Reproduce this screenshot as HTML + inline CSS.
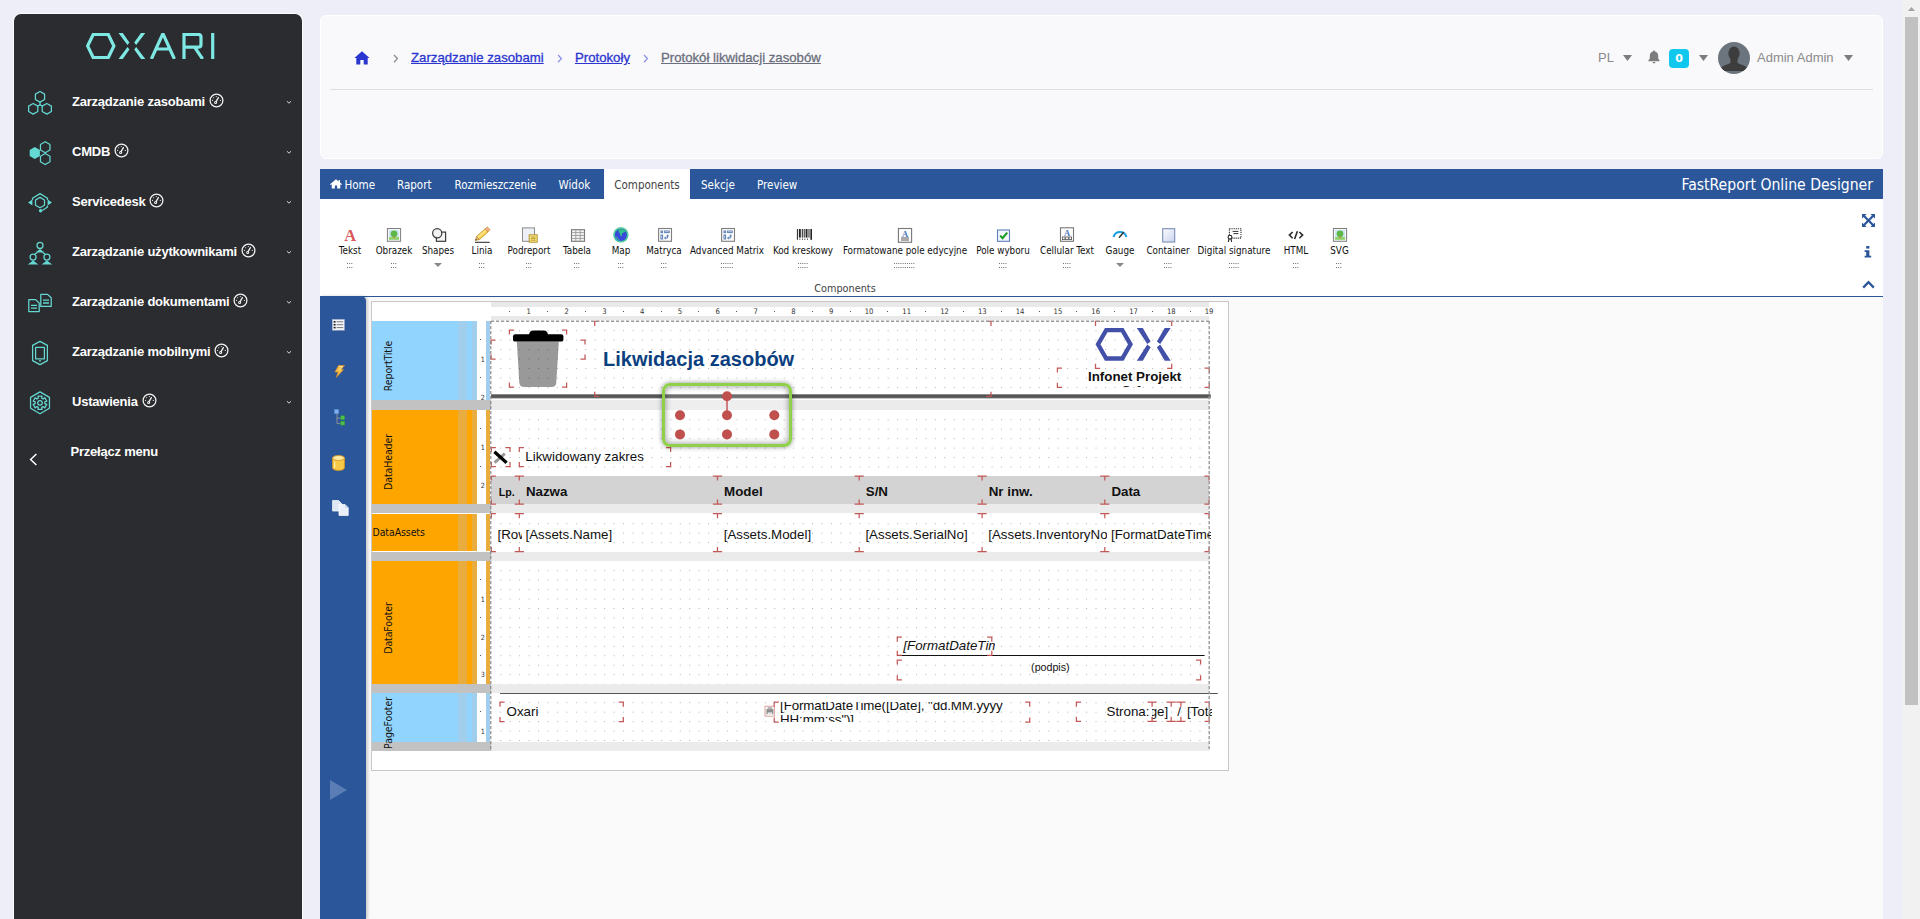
<!DOCTYPE html>
<html lang="pl">
<head>
<meta charset="utf-8">
<title>Protokół likwidacji zasobów</title>
<style>
*{box-sizing:border-box;margin:0;padding:0}
html,body{width:1920px;height:919px;overflow:hidden;background:#eeeef8;font-family:"Liberation Sans",sans-serif;}
.abs{position:absolute}
/* ---------- sidebar ---------- */
#sidebar{position:absolute;left:13px;top:13px;width:290px;height:906px;background:#2b2c2f;border:1px solid #fcfcfe;border-bottom:0;border-radius:8px 8px 0 0;}
#sidebar .logo{position:absolute;left:72px;top:19px}
.mi{position:absolute;left:0;width:288px;height:50px;color:#fff;font-weight:bold;font-size:13px;letter-spacing:-0.22px}
.mi .ic{position:absolute;left:12px;top:13px;width:28px;height:28px}
.mi .tx{position:absolute;left:58px;top:17px;white-space:nowrap;line-height:16px}
.mi .gg{display:inline-block;vertical-align:-1.6px;margin-left:4px}
.mi .ch{position:absolute;left:272px;top:24px}
/* ---------- header card ---------- */
#hdr{position:absolute;left:320px;top:14px;width:1563px;height:145px;}
#hdr .bg{position:absolute;left:0;top:1px;width:1563px;height:144px;background:#f9f9fb;border:1px solid #fff;border-radius:6px}
#hdr .hr{position:absolute;left:10px;top:75px;width:1543px;height:1px;background:#dcdde3}
.bc{position:absolute;top:36px;-webkit-text-stroke:.3px currentColor;font-size:13.2px;line-height:16px;white-space:nowrap;color:#2b35d0;text-decoration:underline;letter-spacing:0}
.bc.g{color:#6b6e7c}
/* ---------- scrollbar ---------- */
#sb{position:absolute;left:1903px;top:0;width:17px;height:919px;background:#f1f1f1}
#sb .th{position:absolute;left:2px;top:17px;width:13px;height:688px;background:#c1c1c1}
/* ---------- designer ---------- */
#tabs{position:absolute;left:320px;top:169px;width:1563px;height:30px;background:#2b579a;font-family:"DejaVu Sans Condensed","DejaVu Sans",sans-serif;font-size:11.5px;color:#fff}
#tabs span{position:absolute;top:0;padding-top:1px;line-height:30px;white-space:nowrap}
#tabs .act{background:#fff;color:#444;height:30px;text-align:center}
#ribbon{position:absolute;left:320px;top:199px;width:1563px;height:97px;background:#fff;font-family:"DejaVu Sans Condensed","DejaVu Sans",sans-serif;}
#ribbon .bl{position:absolute;left:0;top:97px;width:1563px;height:1px;background:#2b579a}
.rb{position:absolute;top:46.1px;font-size:9.8px;line-height:12px;color:#111;white-space:nowrap;transform:translateX(-50%)}
.rd{position:absolute;top:64px;transform:translateX(-50%);height:5px;background-image:radial-gradient(circle,#999 0.5px,transparent 0.6px);background-size:3px 3px;}
#lp{position:absolute;left:320px;top:296px;width:46px;height:623px;background:#2b579a;border-radius:0 5px 0 0;box-shadow:2px 0 3px rgba(0,0,0,.18)}
#ws{position:absolute;left:366px;top:297px;width:1517px;height:622px;background:#fafafa;}
#paper{position:absolute;left:371px;top:301px;width:858px;height:470px;background:#fff;border:1px solid #c8c8c8;overflow:hidden}

#paper .hr{font:7.6px/9.3px "DejaVu Sans Condensed",sans-serif;color:#333}
#paper .rn{position:absolute;top:0.4px;transform:translateX(-50%);}
#paper .rdot{position:absolute;top:4.2px;width:1px;height:1px;background:#555}
#paper .vn{position:absolute;left:1.4px;margin-top:.6px;width:9px;text-align:center;font:7.2px/11px "DejaVu Sans Condensed",sans-serif;color:#333}
#paper .vdot{position:absolute;left:3.6px;width:1px;height:1px;background:#555}
#paper .bl{overflow:visible}
#paper .bl span{position:absolute;left:16px;top:50%;transform:translate(-50%,-50%) rotate(-90deg);white-space:nowrap;font:10.5px/12px "DejaVu Sans Condensed",sans-serif;color:#111;letter-spacing:-.1px}
#paper .ob{overflow:hidden;white-space:nowrap;font-size:13.33px;color:#111;font-family:"Liberation Sans",sans-serif}
</style>
</head>
<body>
<div id="sidebar">
<svg class="logo" width="130" height="26" viewBox="0 0 130 26"><g fill="none" stroke="#7ee9e4" stroke-width="3.2" stroke-linejoin="miter">
<polygon points="1.6,13 7.2,1.45 22.3,1.45 27.9,13 22.3,24.55 7.2,24.55"/>

<path d="M65.4,26 L76.9,0.6 L88.4,26 M70.2,16 H83.8"/>
<path d="M98,26 V1.45 H112.2 Q115,1.45 115,4.2 V11.4 Q115,14.2 112.2,14.2 H98 M108.6,14.2 L116.6,26"/>
<path d="M126.7,0 V26"/></g><path fill="#7ee9e4" d="M32.5 0H36.8L43.4 9.5L41.5 12.1Z M32.5 26H36.8L43.4 16.5L41.5 13.9Z M59.3 0H55L48.2 9.5L50.2 12.1Z M59.3 26H55L48.2 16.5L50.2 13.9Z"/></svg>
<div class="mi" style="top:62px"><svg class="ic" viewBox="0 0 28 28"><g fill="none" stroke="#64d8d2" stroke-width="1.25" stroke-linejoin="round"><polygon points="14.00,2.50 18.59,5.15 18.59,10.45 14.00,13.10 9.41,10.45 9.41,5.15"/><polygon points="7.20,14.50 11.79,17.15 11.79,22.45 7.20,25.10 2.61,22.45 2.61,17.15"/><polygon points="20.80,14.50 25.39,17.15 25.39,22.45 20.80,25.10 16.21,22.45 16.21,17.15"/><path d="M14 13.1V15.6M14 15.6L11.8 17.2M14 15.6L16.2 17.2"/></g></svg><span class="tx">Zarządzanie zasobami<svg class="gg" width="15" height="15" viewBox="0 0 15 15"><circle cx="7.5" cy="7.5" r="6.4" fill="none" stroke="#f4f4f4" stroke-width="1.25"/><path d="M6.6 9.4 L9.4 4.6" stroke="#f4f4f4" stroke-width="1.3" stroke-linecap="round"/><circle cx="6.6" cy="9.4" r="1.5" fill="#f4f4f4"/><circle cx="6.6" cy="9.4" r="0.5" fill="#2b2c2f"/><g fill="#f4f4f4"><circle cx="3.6" cy="7.4" r=".55"/><circle cx="4.7" cy="4.7" r=".55"/><circle cx="7.3" cy="3.5" r=".55"/><circle cx="11.3" cy="7.4" r=".55"/></g></svg></span><svg class="ch" width="6" height="5" viewBox="0 0 6 5"><path d="M0.9 1.2 L3 3.2 L5.1 1.2" fill="none" stroke="#d8d8d8" stroke-width="1"/></svg></div>
<div class="mi" style="top:112px"><svg class="ic" viewBox="0 0 28 28"><polygon points="8.80,8.10 13.91,11.05 13.91,16.95 8.80,19.90 3.69,16.95 3.69,11.05" fill="#64d8d2"/><g fill="none" stroke="#64d8d2" stroke-width="1.25" stroke-linejoin="round"><polygon points="19.20,2.70 23.96,5.45 23.96,10.95 19.20,13.70 14.44,10.95 14.44,5.45"/><polygon points="19.20,14.50 23.96,17.25 23.96,22.75 19.20,25.50 14.44,22.75 14.44,17.25"/></g></svg><span class="tx">CMDB<svg class="gg" width="15" height="15" viewBox="0 0 15 15"><circle cx="7.5" cy="7.5" r="6.4" fill="none" stroke="#f4f4f4" stroke-width="1.25"/><path d="M6.6 9.4 L9.4 4.6" stroke="#f4f4f4" stroke-width="1.3" stroke-linecap="round"/><circle cx="6.6" cy="9.4" r="1.5" fill="#f4f4f4"/><circle cx="6.6" cy="9.4" r="0.5" fill="#2b2c2f"/><g fill="#f4f4f4"><circle cx="3.6" cy="7.4" r=".55"/><circle cx="4.7" cy="4.7" r=".55"/><circle cx="7.3" cy="3.5" r=".55"/><circle cx="11.3" cy="7.4" r=".55"/></g></svg></span><svg class="ch" width="6" height="5" viewBox="0 0 6 5"><path d="M0.9 1.2 L3 3.2 L5.1 1.2" fill="none" stroke="#d8d8d8" stroke-width="1"/></svg></div>
<div class="mi" style="top:162px"><svg class="ic" viewBox="0 0 28 28"><g fill="none" stroke="#64d8d2" stroke-width="1.25" stroke-linejoin="round"><path d="M6.5 11 L6.5 9.2 L14 4.6 L21.5 9.2 L21.5 11"/><polygon points="14.00,8.40 18.50,11.00 18.50,16.20 14.00,18.80 9.50,16.20 9.50,11.00"/><path d="M21.5 16.5 L21.5 18 L16.2 21.6"/></g><path d="M2 13.6 L6.4 10.6 L6.4 16.6Z M26 13.6 L21.6 10.6 L21.6 16.6Z" fill="#64d8d2"/><circle cx="14.6" cy="21.8" r="1.7" fill="#64d8d2"/></svg><span class="tx">Servicedesk<svg class="gg" width="15" height="15" viewBox="0 0 15 15"><circle cx="7.5" cy="7.5" r="6.4" fill="none" stroke="#f4f4f4" stroke-width="1.25"/><path d="M6.6 9.4 L9.4 4.6" stroke="#f4f4f4" stroke-width="1.3" stroke-linecap="round"/><circle cx="6.6" cy="9.4" r="1.5" fill="#f4f4f4"/><circle cx="6.6" cy="9.4" r="0.5" fill="#2b2c2f"/><g fill="#f4f4f4"><circle cx="3.6" cy="7.4" r=".55"/><circle cx="4.7" cy="4.7" r=".55"/><circle cx="7.3" cy="3.5" r=".55"/><circle cx="11.3" cy="7.4" r=".55"/></g></svg></span><svg class="ch" width="6" height="5" viewBox="0 0 6 5"><path d="M0.9 1.2 L3 3.2 L5.1 1.2" fill="none" stroke="#d8d8d8" stroke-width="1"/></svg></div>
<div class="mi" style="top:212px"><svg class="ic" viewBox="0 0 28 28"><g fill="none" stroke="#64d8d2" stroke-width="1.25"><circle cx="14" cy="6.4" r="3"/><circle cx="7.1" cy="18" r="3"/><circle cx="20.9" cy="18" r="3"/><path d="M11.5 13.5 L8.6 15.2 M16.5 13.5 L19.4 15.2"/></g><path d="M14 10 L18.6 13.6 H9.4Z M7.1 21.6 L12.4 25.6 H1.8Z M20.9 21.6 L26.2 25.6 H15.6Z" fill="#64d8d2"/></svg><span class="tx">Zarządzanie użytkownikami<svg class="gg" width="15" height="15" viewBox="0 0 15 15"><circle cx="7.5" cy="7.5" r="6.4" fill="none" stroke="#f4f4f4" stroke-width="1.25"/><path d="M6.6 9.4 L9.4 4.6" stroke="#f4f4f4" stroke-width="1.3" stroke-linecap="round"/><circle cx="6.6" cy="9.4" r="1.5" fill="#f4f4f4"/><circle cx="6.6" cy="9.4" r="0.5" fill="#2b2c2f"/><g fill="#f4f4f4"><circle cx="3.6" cy="7.4" r=".55"/><circle cx="4.7" cy="4.7" r=".55"/><circle cx="7.3" cy="3.5" r=".55"/><circle cx="11.3" cy="7.4" r=".55"/></g></svg></span><svg class="ch" width="6" height="5" viewBox="0 0 6 5"><path d="M0.9 1.2 L3 3.2 L5.1 1.2" fill="none" stroke="#d8d8d8" stroke-width="1"/></svg></div>
<div class="mi" style="top:262px"><svg class="ic" viewBox="0 0 28 28"><g fill="none" stroke="#64d8d2" stroke-width="1.25" stroke-linejoin="round"><path d="M2.8 10.6 H9.6 L13.2 14 V22.6 H2.8Z"/><path d="M14.8 5.4 H21.6 L25.2 8.8 V17.4 H14.8Z"/><path d="M5 16.4H11M5 19.2H11M17 11.2H23M17 14H23" stroke-width="1.3"/></g></svg><span class="tx">Zarządzanie dokumentami<svg class="gg" width="15" height="15" viewBox="0 0 15 15"><circle cx="7.5" cy="7.5" r="6.4" fill="none" stroke="#f4f4f4" stroke-width="1.25"/><path d="M6.6 9.4 L9.4 4.6" stroke="#f4f4f4" stroke-width="1.3" stroke-linecap="round"/><circle cx="6.6" cy="9.4" r="1.5" fill="#f4f4f4"/><circle cx="6.6" cy="9.4" r="0.5" fill="#2b2c2f"/><g fill="#f4f4f4"><circle cx="3.6" cy="7.4" r=".55"/><circle cx="4.7" cy="4.7" r=".55"/><circle cx="7.3" cy="3.5" r=".55"/><circle cx="11.3" cy="7.4" r=".55"/></g></svg></span><svg class="ch" width="6" height="5" viewBox="0 0 6 5"><path d="M0.9 1.2 L3 3.2 L5.1 1.2" fill="none" stroke="#d8d8d8" stroke-width="1"/></svg></div>
<div class="mi" style="top:312px"><svg class="ic" viewBox="0 0 28 28"><g fill="none" stroke="#64d8d2" stroke-width="1.25" stroke-linejoin="round"><path d="M14 2.4 L21.4 6.4 V21.6 L14 25.6 L6.6 21.6 V6.4Z"/><rect x="9.6" y="8.4" width="8.8" height="11.4"/></g><rect x="13" y="21.2" width="2" height="1.3" fill="#64d8d2"/></svg><span class="tx">Zarządzanie mobilnymi<svg class="gg" width="15" height="15" viewBox="0 0 15 15"><circle cx="7.5" cy="7.5" r="6.4" fill="none" stroke="#f4f4f4" stroke-width="1.25"/><path d="M6.6 9.4 L9.4 4.6" stroke="#f4f4f4" stroke-width="1.3" stroke-linecap="round"/><circle cx="6.6" cy="9.4" r="1.5" fill="#f4f4f4"/><circle cx="6.6" cy="9.4" r="0.5" fill="#2b2c2f"/><g fill="#f4f4f4"><circle cx="3.6" cy="7.4" r=".55"/><circle cx="4.7" cy="4.7" r=".55"/><circle cx="7.3" cy="3.5" r=".55"/><circle cx="11.3" cy="7.4" r=".55"/></g></svg></span><svg class="ch" width="6" height="5" viewBox="0 0 6 5"><path d="M0.9 1.2 L3 3.2 L5.1 1.2" fill="none" stroke="#d8d8d8" stroke-width="1"/></svg></div>
<div class="mi" style="top:362px"><svg class="ic" viewBox="0 0 28 28"><g fill="none" stroke="#64d8d2" stroke-width="1.25" stroke-linejoin="round"><polygon points="14.00,2.90 23.44,8.35 23.44,19.25 14.00,24.70 4.56,19.25 4.56,8.35"/><polygon points="11.95,7.11 16.05,7.11 15.68,9.20 17.15,10.05 18.77,8.68 20.82,12.23 18.83,12.95 18.83,14.65 20.82,15.37 18.77,18.92 17.15,17.55 15.68,18.40 16.05,20.49 11.95,20.49 12.32,18.40 10.85,17.55 9.23,18.92 7.18,15.37 9.17,14.65 9.17,12.95 7.18,12.23 9.23,8.68 10.85,10.05 12.32,9.20"/><circle cx="14" cy="13.8" r="2.3"/></g></svg><span class="tx">Ustawienia<svg class="gg" width="15" height="15" viewBox="0 0 15 15"><circle cx="7.5" cy="7.5" r="6.4" fill="none" stroke="#f4f4f4" stroke-width="1.25"/><path d="M6.6 9.4 L9.4 4.6" stroke="#f4f4f4" stroke-width="1.3" stroke-linecap="round"/><circle cx="6.6" cy="9.4" r="1.5" fill="#f4f4f4"/><circle cx="6.6" cy="9.4" r="0.5" fill="#2b2c2f"/><g fill="#f4f4f4"><circle cx="3.6" cy="7.4" r=".55"/><circle cx="4.7" cy="4.7" r=".55"/><circle cx="7.3" cy="3.5" r=".55"/><circle cx="11.3" cy="7.4" r=".55"/></g></svg></span><svg class="ch" width="6" height="5" viewBox="0 0 6 5"><path d="M0.9 1.2 L3 3.2 L5.1 1.2" fill="none" stroke="#d8d8d8" stroke-width="1"/></svg></div>
<div class="mi" style="top:412px"><svg class="abs" style="left:15px;top:27px" width="9" height="13" viewBox="0 0 9 13"><path d="M7.4 1 L1.6 6.5 L7.4 12" fill="none" stroke="#fff" stroke-width="1.5"/></svg><span class="tx" style="left:56.5px;top:18px">Przełącz menu</span></div>
</div>
<div id="hdr"><div class="bg"></div><div class="hr"></div>
<svg class="abs" style="left:34px;top:36.5px" width="16" height="14" viewBox="0 0 16 14"><path d="M8 0.3 L0.4 6.9 H2.3 V13.4 H6.3 V9 H9.7 V13.4 H13.7 V6.9 H15.6 Z" fill="#2b35d0"/></svg><svg class="abs" style="left:72.5px;top:39.5px" width="6" height="10" viewBox="0 0 6 10"><path d="M1 1 L4.4 4.6 L1 8.2" fill="none" stroke="#8a8a8a" stroke-width="1.3"/></svg><span class="bc" style="left:91px">Zarządzanie zasobami</span><svg class="abs" style="left:236.5px;top:39.5px" width="6" height="10" viewBox="0 0 6 10"><path d="M1 1 L4.4 4.6 L1 8.2" fill="none" stroke="#8b90e6" stroke-width="1.3"/></svg><span class="bc" style="left:255px">Protokoły</span><svg class="abs" style="left:322.5px;top:39.5px" width="6" height="10" viewBox="0 0 6 10"><path d="M1 1 L4.4 4.6 L1 8.2" fill="none" stroke="#8b90e6" stroke-width="1.3"/></svg><span class="bc g" style="left:341px">Protokół likwidacji zasobów</span><span class="abs" style="left:1278px;top:36px;font-size:13px;line-height:16px;color:#8a8a8a">PL</span><svg class="abs" style="left:1302.5px;top:40.5px" width="9" height="6" viewBox="0 0 9 6"><path d="M0 0 H9 L4.5 6Z" fill="#7d7d7d"/></svg><svg class="abs" style="left:1328px;top:36px" width="12" height="14" viewBox="0 0 12 14"><path d="M6 0.5 C6.6 0.5 7 0.9 7 1.5 C9 2 10.2 3.6 10.2 5.8 V8.6 L11.6 10.6 V11.2 H0.4 V10.6 L1.8 8.6 V5.8 C1.8 3.6 3 2 5 1.5 C5 0.9 5.4 0.5 6 0.5Z M4.6 12 H7.4 C7.4 12.8 6.8 13.4 6 13.4 C5.2 13.4 4.6 12.8 4.6 12Z" fill="#7d7d7d"/></svg><span class="abs" style="left:1349px;top:35px;width:20px;height:19px;border-radius:4px;background:#10c8ee;color:#fff;font:bold 11px/19px 'DejaVu Sans',sans-serif;text-align:center">0</span><svg class="abs" style="left:1379px;top:40.5px" width="9" height="6" viewBox="0 0 9 6"><path d="M0 0 H9 L4.5 6Z" fill="#7d7d7d"/></svg><svg class="abs" style="left:1398px;top:28px" width="32" height="32" viewBox="0 0 32 32"><defs><clipPath id="av"><circle cx="16" cy="16" r="16"/></clipPath></defs><circle cx="16" cy="16" r="16" fill="#6c757d"/><g clip-path="url(#av)" fill="#3d3d3d"><ellipse cx="16" cy="11.5" rx="5.6" ry="7"/><path d="M12.5 16 H19.5 V21 C22 22.5 27 23.5 29 25.5 V29 H3 V25.5 C5 23.5 10 22.5 12.5 21Z"/></g></svg><span class="abs" style="left:1437px;top:36px;font-size:13px;line-height:16px;color:#8a8a8a;white-space:nowrap">Admin Admin</span><svg class="abs" style="left:1524px;top:40.5px" width="9" height="6" viewBox="0 0 9 6"><path d="M0 0 H9 L4.5 6Z" fill="#7d7d7d"/></svg>
</div>
<div id="sb"><div class="th"></div><svg class="abs" style="left:5px;top:6.5px" width="7" height="4" viewBox="0 0 7 4"><path d="M0 4 L3.5 0 L7 4Z" fill="#a3a3a3"/></svg></div>
<div id="tabs">
<svg class="abs" style="left:10px;top:9.5px" width="12" height="10" viewBox="0 0 12 10"><path d="M6 0.2 L0 5.2 L0.7 6 L1.7 5.2 V9.6 H4.9 V6.6 H7.1 V9.6 H10.3 V5.2 L11.3 6 L12 5.2 L10 3.5 V1 H8.6 V2.4Z" fill="#fff"/></svg><span style="left:24.5px">Home</span><span style="left:77px">Raport</span><span style="left:134.5px">Rozmieszczenie</span><span style="left:238.5px">Widok</span><span class="act" style="left:284px;width:86px">Components</span><span style="left:381px">Sekcje</span><span style="left:437px">Preview</span><span style="right:10px;font-size:15.6px">FastReport Online Designer</span>
</div>
<div id="ribbon"><div class="bl"></div>
<svg class="abs" style="left:21px;top:27px" width="18" height="18" viewBox="-1 -1 18 18"><text x="8.3" y="14" font-family="Liberation Serif,serif" font-weight="bold" font-size="16.5" fill="#d9575a" text-anchor="middle">A</text></svg><span class="rb" style="left:30px">Tekst</span><svg class="abs" style="left:26.8px;top:64px" width="7" height="6" viewBox="0 0 7 6" fill="#707070"><rect x="0.00" y="0" width="1" height="1"/><rect x="0.00" y="4" width="1" height="1"/><rect x="2.15" y="0" width="1" height="1"/><rect x="2.15" y="4" width="1" height="1"/><rect x="4.30" y="0" width="1" height="1"/><rect x="4.30" y="4" width="1" height="1"/></svg><svg class="abs" style="left:65px;top:27px" width="18" height="18" viewBox="-1 -1 18 18"><rect x="1.4" y="1.5" width="13.2" height="12.8" fill="#f6f6f6" stroke="#7f7f7f"/><rect x="3" y="3" width="10" height="9.8" fill="#cfe6fa"/><rect x="3" y="10" width="10" height="2.8" fill="#92d36e"/><circle cx="8" cy="6.8" r="3.4" fill="#5db947"/><rect x="7.3" y="9.4" width="1.4" height="2" fill="#d08a45"/></svg><span class="rb" style="left:74px">Obrazek</span><svg class="abs" style="left:70.8px;top:64px" width="7" height="6" viewBox="0 0 7 6" fill="#707070"><rect x="0.00" y="0" width="1" height="1"/><rect x="0.00" y="4" width="1" height="1"/><rect x="2.15" y="0" width="1" height="1"/><rect x="2.15" y="4" width="1" height="1"/><rect x="4.30" y="0" width="1" height="1"/><rect x="4.30" y="4" width="1" height="1"/></svg><svg class="abs" style="left:109px;top:27px" width="18" height="18" viewBox="-1 -1 18 18"><rect x="6.4" y="5.1" width="9.2" height="9.2" fill="#f4f4f4" stroke="#3c3c3c" stroke-width="1.2"/><circle cx="7.2" cy="6.2" r="4.6" fill="#f1f1f1" stroke="#3c3c3c" stroke-width="1.2"/></svg><span class="rb" style="left:118px">Shapes</span><svg class="abs" style="left:114px;top:64px" width="8" height="4" viewBox="0 0 8 4"><path d="M0 0H8L4 4Z" fill="#8a8a8a"/></svg><svg class="abs" style="left:153px;top:27px" width="18" height="18" viewBox="-1 -1 18 18"><path d="M1 15.3 H15.7" stroke="#222" stroke-width="1"/><g transform="translate(1.4,13.4) rotate(-42)"><path d="M3.4 -2.1 H15 V2.1 H3.4Z" fill="#f8d65c" stroke="#c98f1f" stroke-width=".8"/><path d="M3.4 -0.6 H15" stroke="#fbeaa0" stroke-width="1"/><path d="M0 0 L3.4 -2.1 V2.1Z" fill="#e8c08a" stroke="#b47a2a" stroke-width=".6"/><path d="M0 0 L1.4 -.85 V.85Z" fill="#4a2a10"/><rect x="15" y="-2.1" width="3" height="4.2" rx="1" fill="#f4b0a0" stroke="#c98f1f" stroke-width=".8"/></g></svg><span class="rb" style="left:162px">Linia</span><svg class="abs" style="left:158.8px;top:64px" width="7" height="6" viewBox="0 0 7 6" fill="#707070"><rect x="0.00" y="0" width="1" height="1"/><rect x="0.00" y="4" width="1" height="1"/><rect x="2.15" y="0" width="1" height="1"/><rect x="2.15" y="4" width="1" height="1"/><rect x="4.30" y="0" width="1" height="1"/><rect x="4.30" y="4" width="1" height="1"/></svg><svg class="abs" style="left:200px;top:27px" width="18" height="18" viewBox="-1 -1 18 18"><rect x="1.5" y="0.9" width="12" height="13.4" fill="#eef0f8" stroke="#8a8a8a"/><rect x="8.2" y="7.8" width="8" height="7.4" fill="#fbe88c" stroke="#b3952c"/><path d="M9.8 10H14.6M9.8 11.6H14.6M9.8 13.2H14.6" stroke="#a88a1a" stroke-width=".8"/></svg><span class="rb" style="left:209px">Podreport</span><svg class="abs" style="left:205.8px;top:64px" width="7" height="6" viewBox="0 0 7 6" fill="#707070"><rect x="0.00" y="0" width="1" height="1"/><rect x="0.00" y="4" width="1" height="1"/><rect x="2.15" y="0" width="1" height="1"/><rect x="2.15" y="4" width="1" height="1"/><rect x="4.30" y="0" width="1" height="1"/><rect x="4.30" y="4" width="1" height="1"/></svg><svg class="abs" style="left:248px;top:27px" width="18" height="18" viewBox="-1 -1 18 18"><rect x="2.5" y="2.7" width="13" height="11.6" fill="#f4f4f4" stroke="#777" stroke-width="1.1"/><path d="M2.5 5.6H15.5M2.5 8.5H15.5M2.5 11.4H15.5M6.8 2.7V14.3M11.2 2.7V14.3" stroke="#9a9a9a" stroke-width=".9"/></svg><span class="rb" style="left:257px">Tabela</span><svg class="abs" style="left:253.8px;top:64px" width="7" height="6" viewBox="0 0 7 6" fill="#707070"><rect x="0.00" y="0" width="1" height="1"/><rect x="0.00" y="4" width="1" height="1"/><rect x="2.15" y="0" width="1" height="1"/><rect x="2.15" y="4" width="1" height="1"/><rect x="4.30" y="0" width="1" height="1"/><rect x="4.30" y="4" width="1" height="1"/></svg><svg class="abs" style="left:292px;top:27px" width="18" height="18" viewBox="-1 -1 18 18"><circle cx="7.9" cy="7.9" r="7.6" fill="#2fb58c"/><circle cx="7.9" cy="7.9" r="6" fill="#3a48dc"/><path d="M6 2.6 C8 1.6 11.4 2.4 12.6 4.6 C11.4 5 10.6 6.2 9.4 6 C8.4 7.4 9.6 8.4 8.4 9.4 C7 9 7.4 7 6.6 6 C5.4 5.6 5 3.6 6 2.6Z" fill="#33c08a"/><path d="M3 9 C4 10.4 5.4 11.6 7 13.4 C5 13.4 3 11.4 3 9Z" fill="#33c08a"/><circle cx="7.9" cy="7.9" r="6.8" fill="none" stroke="#7fe0c0" stroke-width=".7" opacity=".8"/></svg><span class="rb" style="left:301px">Map</span><svg class="abs" style="left:297.8px;top:64px" width="7" height="6" viewBox="0 0 7 6" fill="#707070"><rect x="0.00" y="0" width="1" height="1"/><rect x="0.00" y="4" width="1" height="1"/><rect x="2.15" y="0" width="1" height="1"/><rect x="2.15" y="4" width="1" height="1"/><rect x="4.30" y="0" width="1" height="1"/><rect x="4.30" y="4" width="1" height="1"/></svg><svg class="abs" style="left:335px;top:27px" width="18" height="18" viewBox="-1 -1 18 18"><rect x="2.6" y="1.5" width="12.9" height="12.8" fill="#fbfbfb" stroke="#7f7f7f" stroke-width="1.1"/><g fill="none" stroke="#5b7fb5" stroke-width="1"><rect x="5" y="4" width="1.6" height="1.6"/><rect x="8.6" y="4" width="4.6" height="1.6"/><rect x="5" y="8" width="1.6" height="4"/><path d="M8.6 11 H11.6 V8 M8.6 11 L10 9.8 M8.6 11 L10 12.2 M11.6 8 L10.4 9.2 M11.6 8 L12.8 9.2"/></g></svg><span class="rb" style="left:344px">Matryca</span><svg class="abs" style="left:340.8px;top:64px" width="7" height="6" viewBox="0 0 7 6" fill="#707070"><rect x="0.00" y="0" width="1" height="1"/><rect x="0.00" y="4" width="1" height="1"/><rect x="2.15" y="0" width="1" height="1"/><rect x="2.15" y="4" width="1" height="1"/><rect x="4.30" y="0" width="1" height="1"/><rect x="4.30" y="4" width="1" height="1"/></svg><svg class="abs" style="left:398px;top:27px" width="18" height="18" viewBox="-1 -1 18 18"><rect x="2.6" y="1.5" width="12.9" height="12.8" fill="#fbfbfb" stroke="#7f7f7f" stroke-width="1.1"/><g fill="none" stroke="#5b7fb5" stroke-width="1"><rect x="5" y="4" width="1.6" height="1.6"/><rect x="8.6" y="4" width="4.6" height="1.6"/><rect x="5" y="8" width="1.6" height="4"/><path d="M8.6 11 H11.6 V8 M8.6 11 L10 9.8 M8.6 11 L10 12.2 M11.6 8 L10.4 9.2 M11.6 8 L12.8 9.2"/></g></svg><span class="rb" style="left:407px">Advanced Matrix</span><svg class="abs" style="left:400.6px;top:64px" width="14" height="6" viewBox="0 0 14 6" fill="#707070"><rect x="0.00" y="0" width="1" height="1"/><rect x="0.00" y="4" width="1" height="1"/><rect x="2.15" y="0" width="1" height="1"/><rect x="2.15" y="4" width="1" height="1"/><rect x="4.30" y="0" width="1" height="1"/><rect x="4.30" y="4" width="1" height="1"/><rect x="6.45" y="0" width="1" height="1"/><rect x="6.45" y="4" width="1" height="1"/><rect x="8.60" y="0" width="1" height="1"/><rect x="8.60" y="4" width="1" height="1"/><rect x="10.75" y="0" width="1" height="1"/><rect x="10.75" y="4" width="1" height="1"/></svg><svg class="abs" style="left:474px;top:27px" width="18" height="18" viewBox="-1 -1 18 18"><g fill="#222"><rect x="1.9" y="2" width="1" height="10.8"/><rect x="3.9" y="2" width="1.9" height="8.6"/><rect x="6.8" y="2" width="1" height="8.6"/><rect x="8.7" y="2" width="1" height="8.6"/><rect x="10.6" y="2" width="1.9" height="8.6"/><rect x="13.5" y="2" width="1" height="8.6"/><rect x="15.4" y="2" width="1.9" height="10.8"/><rect x="4.4" y="11.6" width=".9" height="1.2"/><rect x="7" y="11.6" width=".9" height="1.2"/><rect x="9.4" y="11.6" width=".9" height="1.2"/><rect x="12" y="11.6" width=".9" height="1.2"/></g></svg><span class="rb" style="left:483px">Kod kreskowy</span><svg class="abs" style="left:477.6px;top:64px" width="12" height="6" viewBox="0 0 12 6" fill="#707070"><rect x="0.00" y="0" width="1" height="1"/><rect x="0.00" y="4" width="1" height="1"/><rect x="2.15" y="0" width="1" height="1"/><rect x="2.15" y="4" width="1" height="1"/><rect x="4.30" y="0" width="1" height="1"/><rect x="4.30" y="4" width="1" height="1"/><rect x="6.45" y="0" width="1" height="1"/><rect x="6.45" y="4" width="1" height="1"/><rect x="8.60" y="0" width="1" height="1"/><rect x="8.60" y="4" width="1" height="1"/></svg><svg class="abs" style="left:576px;top:27px" width="18" height="18" viewBox="-1 -1 18 18"><rect x="1.4" y="1.5" width="13.2" height="13.8" fill="#fdfdfd" stroke="#777" stroke-width="1.1"/><text x="8" y="9.6" font-family="Liberation Serif,serif" font-weight="bold" font-size="8.5" fill="#4a78c0" text-anchor="middle">A</text><path d="M4 11H12M4 13H12" stroke="#444" stroke-width=".9"/></svg><span class="rb" style="left:585px">Formatowane pole edycyjne</span><svg class="abs" style="left:574.2px;top:64px" width="22" height="6" viewBox="0 0 22 6" fill="#707070"><rect x="0.00" y="0" width="1" height="1"/><rect x="0.00" y="4" width="1" height="1"/><rect x="2.15" y="0" width="1" height="1"/><rect x="2.15" y="4" width="1" height="1"/><rect x="4.30" y="0" width="1" height="1"/><rect x="4.30" y="4" width="1" height="1"/><rect x="6.45" y="0" width="1" height="1"/><rect x="6.45" y="4" width="1" height="1"/><rect x="8.60" y="0" width="1" height="1"/><rect x="8.60" y="4" width="1" height="1"/><rect x="10.75" y="0" width="1" height="1"/><rect x="10.75" y="4" width="1" height="1"/><rect x="12.90" y="0" width="1" height="1"/><rect x="12.90" y="4" width="1" height="1"/><rect x="15.05" y="0" width="1" height="1"/><rect x="15.05" y="4" width="1" height="1"/><rect x="17.20" y="0" width="1" height="1"/><rect x="17.20" y="4" width="1" height="1"/><rect x="19.35" y="0" width="1" height="1"/><rect x="19.35" y="4" width="1" height="1"/></svg><svg class="abs" style="left:674px;top:27px" width="18" height="18" viewBox="-1 -1 18 18"><rect x="2.5" y="3" width="12" height="11.3" fill="#f2f6fc" stroke="#5f7fbf" stroke-width="1.1"/><path d="M5.2 8.6 L7.6 11.2 L12.2 5.6" fill="none" stroke="#17991a" stroke-width="2"/></svg><span class="rb" style="left:683px">Pole wyboru</span><svg class="abs" style="left:678.7px;top:64px" width="10" height="6" viewBox="0 0 10 6" fill="#707070"><rect x="0.00" y="0" width="1" height="1"/><rect x="0.00" y="4" width="1" height="1"/><rect x="2.15" y="0" width="1" height="1"/><rect x="2.15" y="4" width="1" height="1"/><rect x="4.30" y="0" width="1" height="1"/><rect x="4.30" y="4" width="1" height="1"/><rect x="6.45" y="0" width="1" height="1"/><rect x="6.45" y="4" width="1" height="1"/></svg><svg class="abs" style="left:738px;top:27px" width="18" height="18" viewBox="-1 -1 18 18"><rect x="1.5" y="0.8" width="13" height="13.5" fill="#fdfdfd" stroke="#777" stroke-width="1.1"/><text x="8" y="8.6" font-family="Liberation Serif,serif" font-weight="bold" font-size="8.5" fill="#4a78c0" text-anchor="middle">A</text><g fill="#fff" stroke="#555" stroke-width=".8"><rect x="3.4" y="10" width="2.6" height="2.6"/><rect x="6.7" y="10" width="2.6" height="2.6"/><rect x="10" y="10" width="2.6" height="2.6"/></g></svg><span class="rb" style="left:747px">Cellular Text</span><svg class="abs" style="left:742.7px;top:64px" width="10" height="6" viewBox="0 0 10 6" fill="#707070"><rect x="0.00" y="0" width="1" height="1"/><rect x="0.00" y="4" width="1" height="1"/><rect x="2.15" y="0" width="1" height="1"/><rect x="2.15" y="4" width="1" height="1"/><rect x="4.30" y="0" width="1" height="1"/><rect x="4.30" y="4" width="1" height="1"/><rect x="6.45" y="0" width="1" height="1"/><rect x="6.45" y="4" width="1" height="1"/></svg><svg class="abs" style="left:791px;top:27px" width="18" height="18" viewBox="-1 -1 18 18"><path d="M1.6 10 A6.6 6.6 0 0 1 14.4 10" fill="none" stroke="#1b9fe4" stroke-width="2.1"/><path d="M7.4 10.2 L11.4 5.6" stroke="#333" stroke-width="1.5" stroke-linecap="round"/></svg><span class="rb" style="left:800px">Gauge</span><svg class="abs" style="left:796px;top:64px" width="8" height="4" viewBox="0 0 8 4"><path d="M0 0H8L4 4Z" fill="#8a8a8a"/></svg><svg class="abs" style="left:839px;top:27px" width="18" height="18" viewBox="-1 -1 18 18"><defs><linearGradient id="cg" x1="0" y1="0" x2="1" y2="1"><stop offset="0" stop-color="#fdfdff"/><stop offset="1" stop-color="#c9d3ec"/></linearGradient></defs><rect x="2.7" y="1.7" width="12" height="13.3" fill="url(#cg)" stroke="#7a8db8" stroke-width="1.1"/></svg><span class="rb" style="left:848px">Container</span><svg class="abs" style="left:843.7px;top:64px" width="10" height="6" viewBox="0 0 10 6" fill="#707070"><rect x="0.00" y="0" width="1" height="1"/><rect x="0.00" y="4" width="1" height="1"/><rect x="2.15" y="0" width="1" height="1"/><rect x="2.15" y="4" width="1" height="1"/><rect x="4.30" y="0" width="1" height="1"/><rect x="4.30" y="4" width="1" height="1"/><rect x="6.45" y="0" width="1" height="1"/><rect x="6.45" y="4" width="1" height="1"/></svg><svg class="abs" style="left:905px;top:27px" width="18" height="18" viewBox="-1 -1 18 18"><rect x="3.4" y="1.7" width="11.6" height="9.4" fill="#fff" stroke="#333" stroke-width="1.1" stroke-dasharray="1.2 .9"/><path d="M6.6 4.4H12.4M7.6 6.6H12.4" stroke="#333" stroke-width="1"/><circle cx="4" cy="10.2" r="1.9" fill="#fff" stroke="#222" stroke-width="1.1"/><path d="M3 12 L2.3 15 M5 12 L5.7 15" stroke="#222" stroke-width="1.1"/></svg><span class="rb" style="left:914px">Digital signature</span><svg class="abs" style="left:908.6px;top:64px" width="12" height="6" viewBox="0 0 12 6" fill="#707070"><rect x="0.00" y="0" width="1" height="1"/><rect x="0.00" y="4" width="1" height="1"/><rect x="2.15" y="0" width="1" height="1"/><rect x="2.15" y="4" width="1" height="1"/><rect x="4.30" y="0" width="1" height="1"/><rect x="4.30" y="4" width="1" height="1"/><rect x="6.45" y="0" width="1" height="1"/><rect x="6.45" y="4" width="1" height="1"/><rect x="8.60" y="0" width="1" height="1"/><rect x="8.60" y="4" width="1" height="1"/></svg><svg class="abs" style="left:967px;top:27px" width="18" height="18" viewBox="-1 -1 18 18"><path d="M4.6 5 L1.4 8.1 L4.6 11.2 M11.4 5 L14.6 8.1 L11.4 11.2 M9.4 4.2 L6.6 12" fill="none" stroke="#2c2c2c" stroke-width="1.6"/></svg><span class="rb" style="left:976px">HTML</span><svg class="abs" style="left:972.8px;top:64px" width="7" height="6" viewBox="0 0 7 6" fill="#707070"><rect x="0.00" y="0" width="1" height="1"/><rect x="0.00" y="4" width="1" height="1"/><rect x="2.15" y="0" width="1" height="1"/><rect x="2.15" y="4" width="1" height="1"/><rect x="4.30" y="0" width="1" height="1"/><rect x="4.30" y="4" width="1" height="1"/></svg><svg class="abs" style="left:1010.5px;top:27px" width="18" height="18" viewBox="-1 -1 18 18"><rect x="1.4" y="1.5" width="13.2" height="12.8" fill="#f6f6f6" stroke="#7f7f7f"/><rect x="3" y="3" width="10" height="9.8" fill="#cfe6fa"/><rect x="3" y="10" width="10" height="2.8" fill="#92d36e"/><circle cx="8" cy="6.8" r="3.4" fill="#5db947"/><rect x="7.3" y="9.4" width="1.4" height="2" fill="#d08a45"/></svg><span class="rb" style="left:1019.5px">SVG</span><svg class="abs" style="left:1016.3px;top:64px" width="7" height="6" viewBox="0 0 7 6" fill="#707070"><rect x="0.00" y="0" width="1" height="1"/><rect x="0.00" y="4" width="1" height="1"/><rect x="2.15" y="0" width="1" height="1"/><rect x="2.15" y="4" width="1" height="1"/><rect x="4.30" y="0" width="1" height="1"/><rect x="4.30" y="4" width="1" height="1"/></svg><span class="rb" style="left:525px;top:84.2px;font-size:10.8px;color:#444">Components</span><svg class="abs" style="left:1541.5px;top:14.5px" width="13" height="13" viewBox="0 0 13 13" fill="#2b579a"><path d="M0 0H4.6L3.1 1.5L6.5 4.9L9.9 1.5L8.4 0H13V4.6L11.5 3.1L8.1 6.5L11.5 9.9L13 8.4V13H8.4L9.9 11.5L6.5 8.1L3.1 11.5L4.6 13H0V8.4L1.5 9.9L4.9 6.5L1.5 3.1L0 4.6Z"/></svg><svg class="abs" style="left:1544px;top:46.5px" width="8" height="12" viewBox="0 0 8 12" fill="#2b579a"><rect x="2.2" y="0" width="3.2" height="2.6"/><path d="M0.6 4.2H5.4V9.8H7.2V11.6H0.6V9.8H2.2V6H0.6Z"/></svg><svg class="abs" style="left:1541.5px;top:81px" width="13" height="9" viewBox="0 0 13 9"><path d="M1.2 7.6 L6.5 2.2 L11.8 7.6" fill="none" stroke="#2b579a" stroke-width="2.3"/></svg>
</div>
<div id="ws"></div>
<div id="lp"><svg class="abs" style="left:12px;top:22.5px" width="13" height="12" viewBox="0 0 13 12"><rect x=".3" y=".4" width="12" height="10.8" fill="#f4f6fb" stroke="#aab4d0" stroke-width=".6"/><g fill="#222"><rect x="1.6" y="2" width="2" height="1.6"/><rect x="1.6" y="4.9" width="2" height="1.6"/><rect x="1.6" y="7.8" width="2" height="1.6"/></g><g fill="#777"><rect x="4.6" y="2.3" width="6.6" height="1"/><rect x="4.6" y="5.2" width="6.6" height="1"/><rect x="4.6" y="8.1" width="6.6" height="1"/></g></svg><svg class="abs" style="left:13.5px;top:68.5px" width="11" height="13" viewBox="0 0 11 13"><path d="M4.6 0.4 L10.6 0.4 L7 4.6 L9.6 4.6 L2.2 12.4 L4.2 7 L1 7Z" fill="#f7c24a" stroke="#d98a2a" stroke-width=".7" stroke-linejoin="round"/><path d="M5.2 1.4 L8.4 1.4 L5.6 5.2" stroke="#fde9a8" stroke-width=".9" fill="none"/></svg><svg class="abs" style="left:13.5px;top:112.5px" width="12" height="17" viewBox="0 0 12 17"><path d="M3 4.6 V14.6 H6.6 M3 9.2 H6.6" fill="none" stroke="#8a8f98" stroke-width="1"/><rect x=".5" y=".5" width="4.2" height="4.2" fill="#7fb2ee" stroke="#5a8fd0" stroke-width=".5"/><rect x="6.8" y="6.8" width="3.9" height="3.9" fill="#4fc04a" stroke="#2f9a2f" stroke-width=".5"/><rect x="6.8" y="12.2" width="3.9" height="3.9" fill="#4fc04a" stroke="#2f9a2f" stroke-width=".5"/></svg><svg class="abs" style="left:11.5px;top:159px" width="13" height="16" viewBox="0 0 13 16"><path d="M.6 3 V12.8 C.6 14.4 3.2 15.4 6.5 15.4 C9.8 15.4 12.4 14.4 12.4 12.8 V3Z" fill="#f7c948" stroke="#d9961e" stroke-width=".9"/><ellipse cx="6.5" cy="3" rx="5.9" ry="2.5" fill="#fdeaa0" stroke="#d9961e" stroke-width=".9"/><path d="M2.6 6.4 V13" stroke="#fde9a0" stroke-width="1.4"/></svg><svg class="abs" style="left:12px;top:204px" width="18" height="16" viewBox="0 0 18 16"><path d="M.6 .6 H6.6 L9.6 3.6 V11 H.6Z" fill="#dfe6f3" stroke="#f8fafd" stroke-width=".8"/><path d="M7 4.6 H13 L16.2 7.8 V15.4 H7Z" fill="#e9eef8" stroke="#fbfcfe" stroke-width=".8"/><path d="M13 4.6 V7.8 H16.2" fill="#c9d3e6"/></svg><svg class="abs" style="left:10px;top:484px" width="17" height="20" viewBox="0 0 17 20"><path d="M0 0 L17 10 L0 20Z" fill="#5b7db5"/></svg></div>
<div id="paper"><!--P0-->
<svg width="0" height="0" style="position:absolute"><defs><pattern id="grid" x="-6" y="-6" width="9.449" height="9.449" patternUnits="userSpaceOnUse"><rect x="3.8" y="3.8" width="1" height="1" fill="#b0b0b0"/></pattern></defs></svg>
<div class="abs " style="left:119px;top:0px;width:718.1px;height:18.3px;background:#e9e9e9"></div>
<div class="abs " style="left:119px;top:4.8px;width:738.1px;height:9.3px;background:#fff"></div>
<div class="abs hr" style="left:119px;top:4.8px;width:738.1px;height:9.3px;"><span class="rn" style="left:37.8px">1</span><span class="rn" style="left:75.6px">2</span><span class="rn" style="left:113.4px">3</span><span class="rn" style="left:151.2px">4</span><span class="rn" style="left:189.0px">5</span><span class="rn" style="left:226.8px">6</span><span class="rn" style="left:264.6px">7</span><span class="rn" style="left:302.4px">8</span><span class="rn" style="left:340.2px">9</span><span class="rn" style="left:378.0px">10</span><span class="rn" style="left:415.7px">11</span><span class="rn" style="left:453.5px">12</span><span class="rn" style="left:491.3px">13</span><span class="rn" style="left:529.1px">14</span><span class="rn" style="left:566.9px">15</span><span class="rn" style="left:604.7px">16</span><span class="rn" style="left:642.5px">17</span><span class="rn" style="left:680.3px">18</span><span class="rn" style="left:718.1px">19</span><i class="rdot" style="left:18.4px"></i><i class="rdot" style="left:56.2px"></i><i class="rdot" style="left:94.0px"></i><i class="rdot" style="left:131.8px"></i><i class="rdot" style="left:169.6px"></i><i class="rdot" style="left:207.4px"></i><i class="rdot" style="left:245.2px"></i><i class="rdot" style="left:283.0px"></i><i class="rdot" style="left:320.8px"></i><i class="rdot" style="left:358.6px"></i><i class="rdot" style="left:396.3px"></i><i class="rdot" style="left:434.1px"></i><i class="rdot" style="left:471.9px"></i><i class="rdot" style="left:509.7px"></i><i class="rdot" style="left:547.5px"></i><i class="rdot" style="left:585.3px"></i><i class="rdot" style="left:623.1px"></i><i class="rdot" style="left:660.9px"></i><i class="rdot" style="left:698.7px"></i></div>
<div class="abs " style="left:0px;top:19px;width:86px;height:79.3px;background:#91d5ff"></div>
<div class="abs " style="left:86px;top:19px;width:9.1px;height:79.3px;background:#a0ceec"></div>
<div class="abs " style="left:95.1px;top:19px;width:5.1px;height:79.3px;background:#91d5ff"></div>
<div class="abs " style="left:100.2px;top:19px;width:4.7px;height:79.3px;background:#a0ceec"></div>
<div class="abs " style="left:114px;top:19px;width:4.3px;height:79.3px;background:#a0ceec"></div>
<div class="abs " style="left:104.9px;top:19px;width:9.1px;height:79.3px;background:#fff;overflow:hidden"><span class="vn" style="top:32.3px">1</span><span class="vn" style="top:70.1px">2</span><i class="vdot" style="top:18.4px"></i><i class="vdot" style="top:56.2px"></i></div>
<div class="abs bc" style="left:119px;top:19px;width:718.1px;height:79.3px;"><svg style="position:absolute;left:2px;top:2px" width="716" height="77.3"><rect width="100%" height="100%" fill="url(#grid)"/></svg></div>
<div class="abs " style="left:0px;top:98.3px;width:119px;height:9.3px;background:#c2c2c2"></div>
<div class="abs " style="left:119px;top:98.3px;width:718.1px;height:9.3px;background:#ebebeb"></div>
<div class="abs " style="left:0px;top:107.6px;width:86px;height:94.6px;background:#ffa500"></div>
<div class="abs " style="left:86px;top:107.6px;width:9.1px;height:94.6px;background:#e9ac3e"></div>
<div class="abs " style="left:95.1px;top:107.6px;width:5.1px;height:94.6px;background:#ffa500"></div>
<div class="abs " style="left:100.2px;top:107.6px;width:4.7px;height:94.6px;background:#e9ac3e"></div>
<div class="abs " style="left:114px;top:107.6px;width:4.3px;height:94.6px;background:#e9ac3e"></div>
<div class="abs " style="left:104.9px;top:107.6px;width:9.1px;height:94.6px;background:#fff;overflow:hidden"><span class="vn" style="top:32.3px">1</span><span class="vn" style="top:70.1px">2</span><i class="vdot" style="top:18.4px"></i><i class="vdot" style="top:56.2px"></i><i class="vdot" style="top:94.0px"></i></div>
<div class="abs bc" style="left:119px;top:107.6px;width:718.1px;height:94.6px;"><svg style="position:absolute;left:2px;top:2px" width="716" height="92.6"><rect width="100%" height="100%" fill="url(#grid)"/></svg></div>
<div class="abs " style="left:0px;top:202.2px;width:119px;height:9.3px;background:#c2c2c2"></div>
<div class="abs " style="left:119px;top:202.2px;width:718.1px;height:9.3px;background:#ebebeb"></div>
<div class="abs " style="left:0px;top:211.6px;width:86px;height:37.9px;background:#ffa500"></div>
<div class="abs " style="left:86px;top:211.6px;width:9.1px;height:37.9px;background:#e9ac3e"></div>
<div class="abs " style="left:95.1px;top:211.6px;width:5.1px;height:37.9px;background:#ffa500"></div>
<div class="abs " style="left:100.2px;top:211.6px;width:4.7px;height:37.9px;background:#e9ac3e"></div>
<div class="abs " style="left:114px;top:211.6px;width:4.3px;height:37.9px;background:#e9ac3e"></div>
<div class="abs " style="left:104.9px;top:211.6px;width:9.1px;height:37.9px;background:#fff;overflow:hidden"></div>
<div class="abs" style="left:0.5px;top:211.6px;height:37.9px;line-height:37.9px;font:10.5px/37.9px 'DejaVu Sans Condensed',sans-serif;color:#111;letter-spacing:-.1px">DataAssets</div>
<div class="abs bc" style="left:119px;top:211.6px;width:718.1px;height:37.9px;"><svg style="position:absolute;left:2px;top:2px" width="716" height="35.9"><rect width="100%" height="100%" fill="url(#grid)"/></svg></div>
<div class="abs " style="left:0px;top:249.5px;width:119px;height:9.3px;background:#c2c2c2"></div>
<div class="abs " style="left:119px;top:249.5px;width:718.1px;height:9.3px;background:#ebebeb"></div>
<div class="abs " style="left:0px;top:258.9px;width:86px;height:122.7px;background:#ffa500"></div>
<div class="abs " style="left:86px;top:258.9px;width:9.1px;height:122.7px;background:#e9ac3e"></div>
<div class="abs " style="left:95.1px;top:258.9px;width:5.1px;height:122.7px;background:#ffa500"></div>
<div class="abs " style="left:100.2px;top:258.9px;width:4.7px;height:122.7px;background:#e9ac3e"></div>
<div class="abs " style="left:114px;top:258.9px;width:4.3px;height:122.7px;background:#e9ac3e"></div>
<div class="abs " style="left:104.9px;top:258.9px;width:9.1px;height:122.7px;background:#fff;overflow:hidden"><span class="vn" style="top:32.3px">1</span><span class="vn" style="top:70.1px">2</span><span class="vn" style="top:107.9px">3</span><i class="vdot" style="top:18.4px"></i><i class="vdot" style="top:56.2px"></i><i class="vdot" style="top:94.0px"></i></div>
<div class="abs bc" style="left:119px;top:258.9px;width:718.1px;height:122.7px;"><svg style="position:absolute;left:2px;top:2px" width="716" height="120.7"><rect width="100%" height="100%" fill="url(#grid)"/></svg></div>
<div class="abs " style="left:0px;top:381.6px;width:119px;height:9.3px;background:#c2c2c2"></div>
<div class="abs " style="left:119px;top:381.6px;width:718.1px;height:9.3px;background:#ebebeb"></div>
<div class="abs " style="left:0px;top:391px;width:86px;height:48.7px;background:#91d5ff"></div>
<div class="abs " style="left:86px;top:391px;width:9.1px;height:48.7px;background:#a0ceec"></div>
<div class="abs " style="left:95.1px;top:391px;width:5.1px;height:48.7px;background:#91d5ff"></div>
<div class="abs " style="left:100.2px;top:391px;width:4.7px;height:48.7px;background:#a0ceec"></div>
<div class="abs " style="left:114px;top:391px;width:4.3px;height:48.7px;background:#a0ceec"></div>
<div class="abs " style="left:104.9px;top:391px;width:9.1px;height:48.7px;background:#fff;overflow:hidden"><span class="vn" style="top:32.3px">1</span><i class="vdot" style="top:18.4px"></i></div>
<div class="abs bc" style="left:119px;top:391px;width:718.1px;height:48.7px;"><svg style="position:absolute;left:2px;top:2px" width="716" height="46.7"><rect width="100%" height="100%" fill="url(#grid)"/></svg></div>
<div class="abs " style="left:0px;top:439.7px;width:119px;height:9.3px;background:#c2c2c2"></div>
<div class="abs " style="left:119px;top:439.7px;width:718.1px;height:9.3px;background:#ebebeb"></div>
<div class="abs bl" style="left:0px;top:24.5px;width:36px;height:79.3px"><span>ReportTitle</span></div>
<div class="abs bl" style="left:0px;top:113.1px;width:36px;height:94.6px"><span>DataHeader</span></div>
<div class="abs bl" style="left:0px;top:264.4px;width:36px;height:122.7px"><span>DataFooter</span></div>
<div class="abs bl" style="left:0px;top:396.5px;width:36px;height:48.7px"><span>PageFooter</span></div>
<svg class="abs" style="left:0;top:0" width="856" height="468" viewBox="372 302 856 468"><path d="M529 335.6 Q529 330.4 533.4 330.4 H543.6 Q548 330.4 548 335.6Z" fill="#000"/><rect x="513" y="334.2" width="50.4" height="7.4" rx="2.2" fill="#000"/><path d="M516.8 341.6 H558.8 L556.3 382.5 Q556 387 551.5 387 H524.1 Q519.6 387 519.3 382.5Z" fill="#000" fill-opacity=".4"/><g fill="none" stroke="#4350a8" stroke-width="4.3" stroke-linejoin="miter"><polygon points="1098,344.3 1106.2,330.2 1122.3,330.2 1130.5,344.3 1122.3,358.5 1106.2,358.5"/></g><path d="M1136.8 328H1142.8L1150.6 341.4L1147.3 344.1Z M1136.8 360.7H1142.8L1150.6 347.3L1147.3 344.6Z M1170.7 328H1164.7L1156.9 341.4L1160.2 344.1Z M1170.7 360.7H1164.7L1156.9 347.3L1160.2 344.6Z" fill="#4350a8"/><path d="M494.6 462.6 L504.8 453.6" stroke="#9a9a9a" stroke-width="3"/><path d="M494.4 451.8 L506.6 462.8" stroke="#000" stroke-width="3.2"/><path d="M897.3 655.5 H1204.6" stroke="#111" stroke-width="1.1"/><path d="M500 693.5 H1217.8" stroke="#555" stroke-width="1.2"/><g><rect x="765" y="706.2" width="9.4" height="10" fill="#fff" fill-opacity=".6" stroke="#d9a3a0" stroke-width="1"/><rect x="766.4" y="709" width="7" height="5.4" fill="#8c8c8c"/><rect x="767.6" y="707" width="4.6" height="2.4" fill="#b5b5b5"/><rect x="767.6" y="712.4" width="4.6" height="2.6" fill="#e8e8e8"/></g><path d="M491 396.3 H1210.6" stroke="#8a8a8a" stroke-width="4.4"/><path d="M491 396.3 H1210.6" stroke="#555" stroke-width="2.8"/></svg>
<div class="abs" style="left:231px;top:44.5px;font:bold 20px/24px 'Liberation Sans',sans-serif;color:#0b3f7f;white-space:nowrap">Likwidacja zasobów</div>
<div class="abs ob" style="left:685.4px;top:66px;width:151.8px;height:19.4px;text-align:center;font-weight:bold;line-height:13.7px"><div style="margin-top:1.9px;padding-left:2.7px">Infonet Projekt<br>S.A.</div></div>
<div class="abs ob" style="left:147.3px;top:144.8px;width:151.7px;height:19.1px;line-height:19.1px;padding-left:6px;">Likwidowany zakres</div>
<div class="abs ob" style="left:119.3px;top:174px;width:28.4px;height:28.2px;line-height:28.2px;padding-left:2.5px;background:#d3d3d3;font-weight:bold;padding-top:1.7px;font-size:10.67px;text-align:center;padding-left:2.5px;">Lp.</div>
<div class="abs ob" style="left:147.3px;top:174px;width:198.6px;height:28.2px;line-height:28.2px;padding-left:6.6px;background:#d3d3d3;font-weight:bold;padding-top:1.7px;">Nazwa</div>
<div class="abs ob" style="left:345.5px;top:174px;width:142.1px;height:28.2px;line-height:28.2px;padding-left:6.6px;background:#d3d3d3;font-weight:bold;padding-top:1.7px;">Model</div>
<div class="abs ob" style="left:487.2px;top:174px;width:123.3px;height:28.2px;line-height:28.2px;padding-left:6.6px;background:#d3d3d3;font-weight:bold;padding-top:1.7px;">S/N</div>
<div class="abs ob" style="left:610.1px;top:174px;width:123.1px;height:28.2px;line-height:28.2px;padding-left:6.6px;background:#d3d3d3;font-weight:bold;padding-top:1.7px;">Nr inw.</div>
<div class="abs ob" style="left:732.8px;top:174px;width:104.6px;height:28.2px;line-height:28.2px;padding-left:6.6px;background:#d3d3d3;font-weight:bold;padding-top:1.7px;">Data</div>
<div class="abs ob" style="left:119.3px;top:211.6px;width:30.4px;height:37.9px;line-height:37.9px;padding-left:6.2px;padding-top:2.2px">[Row#]</div>
<div class="abs ob" style="left:147.3px;top:211.6px;width:200.6px;height:37.9px;line-height:37.9px;padding-left:6.2px;padding-top:2.2px">[Assets.Name]</div>
<div class="abs ob" style="left:345.5px;top:211.6px;width:144.1px;height:37.9px;line-height:37.9px;padding-left:6.2px;padding-top:2.2px">[Assets.Model]</div>
<div class="abs ob" style="left:487.2px;top:211.6px;width:125.3px;height:37.9px;line-height:37.9px;padding-left:6.2px;padding-top:2.2px">[Assets.SerialNo]</div>
<div class="abs ob" style="left:610.1px;top:211.6px;width:125.1px;height:37.9px;line-height:37.9px;padding-left:6.2px;padding-top:2.2px">[Assets.InventoryNo]</div>
<div class="abs ob" style="left:732.8px;top:211.6px;width:106.6px;height:37.9px;line-height:37.9px;padding-left:6.2px;padding-top:2.2px">[FormatDateTime([Assets.Date],"dd.MM.yyyy")]</div>
<div class="abs ob" style="left:525.3px;top:334.6px;width:97.4px;height:18.2px;line-height:18.2px;padding-left:6px;font-style:italic;">[FormatDateTime([Date],"dd.MM.yyyy")]</div>
<div class="abs ob" style="left:525.3px;top:355.8px;width:303.7px;height:19.8px;line-height:19.8px;padding-left:2.4px;font-size:10.67px;text-align:center;">(podpis)</div>
<div class="abs ob" style="left:128px;top:400.2px;width:123.7px;height:19.4px;line-height:19.4px;padding-left:6.6px;padding-top:0.2px">Oxari</div>
<div class="abs ob" style="left:402.2px;top:400.2px;width:255.5px;height:19.8px;"><div style="margin-top:-3.1px;padding-left:5.9px;line-height:14.3px;white-space:normal;width:240px;letter-spacing:-.11px">[FormatDateTime([Date], "dd.MM.yyyy HH:mm:ss")]</div></div>
<div class="abs ob" style="left:704.4px;top:399.5px;width:76.1px;height:19.2px;line-height:19.2px;padding-left:0px;text-align:right;padding-right:3px;">Strona:</div>
<div class="abs ob" style="left:780.1px;top:399.5px;width:19.5px;height:19.2px;line-height:19.2px;padding-left:0px;"><span style="position:absolute;right:3.4px;top:0">[Page]</span></div>
<div class="abs ob" style="left:799.2px;top:399.5px;width:10.1px;height:19.2px;line-height:19.2px;padding-left:6px;">/</div>
<div class="abs ob" style="left:808.9px;top:399.5px;width:30.7px;height:19.2px;line-height:19.2px;padding-left:6px;">[TotalPages]</div>
<svg class="abs" style="left:0;top:0" width="856" height="468" viewBox="372 302 856 468"><path d="M491 344.6V340H495.6M580.4 340H585V344.6M491 354.4V359H495.6M580.4 359H585V354.4M509.4 334.6V330H514.0M562.0 330H566.6V334.6M509.4 382.5V387.1H514.0M562.0 387.1H566.6V382.5M594.7 325.90000000000003V321.3H599.3000000000001M986.4 321.3H991V325.90000000000003M594.7 391.79999999999995V396.4H599.3000000000001M986.4 396.4H991V391.79999999999995M1095.5 325.90000000000003V321.3H1100.1M1167.1000000000001 321.3H1171.7V325.90000000000003M1095.5 363.7V368.3H1100.1M1167.1000000000001 368.3H1171.7V363.7M1057.4 372.6V368H1062.0M1204.6000000000001 368H1209.2V372.6M1057.4 382.79999999999995V387.4H1062.0M1204.6000000000001 387.4H1209.2V382.79999999999995M491.3 452.1V447.5H495.90000000000003M505.4 447.5H510V452.1M491.3 462.0V466.6H495.90000000000003M505.4 466.6H510V462.0M519.3 452.1V447.5H523.9M666.0 447.5H670.6V452.1M519.3 462.0V466.6H523.9M666.0 466.6H670.6V462.0M491.3 480.6V476H495.90000000000003M514.6999999999999 476H519.3V480.6M491.3 499.59999999999997V504.2H495.90000000000003M514.6999999999999 504.2H519.3V499.59999999999997M519.3 480.6V476H523.9M712.9 476H717.5V480.6M519.3 499.59999999999997V504.2H523.9M712.9 504.2H717.5V499.59999999999997M717.5 480.6V476H722.1M854.6 476H859.2V480.6M717.5 499.59999999999997V504.2H722.1M854.6 504.2H859.2V499.59999999999997M859.2 480.6V476H863.8000000000001M977.5 476H982.1V480.6M859.2 499.59999999999997V504.2H863.8000000000001M977.5 504.2H982.1V499.59999999999997M982.1 480.6V476H986.7M1100.2 476H1104.8V480.6M982.1 499.59999999999997V504.2H986.7M1100.2 504.2H1104.8V499.59999999999997M1104.8 480.6V476H1109.3999999999999M1204.4 476H1209V480.6M1104.8 499.59999999999997V504.2H1109.3999999999999M1204.4 504.2H1209V499.59999999999997M491.3 518.2V513.6H495.90000000000003M514.6999999999999 513.6H519.3V518.2M491.3 546.9V551.5H495.90000000000003M514.6999999999999 551.5H519.3V546.9M519.3 518.2V513.6H523.9M712.9 513.6H717.5V518.2M519.3 546.9V551.5H523.9M712.9 551.5H717.5V546.9M717.5 518.2V513.6H722.1M854.6 513.6H859.2V518.2M717.5 546.9V551.5H722.1M854.6 551.5H859.2V546.9M859.2 518.2V513.6H863.8000000000001M977.5 513.6H982.1V518.2M859.2 546.9V551.5H863.8000000000001M977.5 551.5H982.1V546.9M982.1 518.2V513.6H986.7M1100.2 513.6H1104.8V518.2M982.1 546.9V551.5H986.7M1100.2 551.5H1104.8V546.9M1104.8 518.2V513.6H1109.3999999999999M1204.4 513.6H1209V518.2M1104.8 546.9V551.5H1109.3999999999999M1204.4 551.5H1209V546.9M897.3 641.8000000000001V637.2H901.9M987.1999999999999 637.2H991.8V641.8000000000001M897.3 650.8V655.4H901.9M987.1999999999999 655.4H991.8V650.8M897.3 664.6V660H901.9M1196.0 660H1200.6V664.6M897.3 675.1999999999999V679.8H901.9M1196.0 679.8H1200.6V675.1999999999999M500 706.8000000000001V702.2H504.6M618.6999999999999 702.2H623.3V706.8000000000001M500 717.0V721.6H504.6M618.6999999999999 721.6H623.3V717.0M774.2 706.8000000000001V702.2H778.8000000000001M1025.1000000000001 702.2H1029.7V706.8000000000001M774.2 717.4V722H778.8000000000001M1025.1000000000001 722H1029.7V717.4M1076.4 706.8000000000001V702.2H1081.0M1147.5 702.2H1152.1V706.8000000000001M1076.4 716.8V721.4H1081.0M1147.5 721.4H1152.1V716.8M1152.1 706.8000000000001V702.2H1156.6999999999998M1166.6000000000001 702.2H1171.2V706.8000000000001M1152.1 716.8V721.4H1156.6999999999998M1166.6000000000001 721.4H1171.2V716.8M1171.2 706.8000000000001V702.2H1175.8M1176.3000000000002 702.2H1180.9V706.8000000000001M1171.2 716.8V721.4H1175.8M1176.3000000000002 721.4H1180.9V716.8M1180.9 706.8000000000001V702.2H1185.5M1204.6000000000001 702.2H1209.2V706.8000000000001M1180.9 716.8V721.4H1185.5M1204.6000000000001 721.4H1209.2V716.8" fill="none" stroke="#c0504d" stroke-width="1.25" stroke-opacity=".95"/><path d="M491 321.2 H1209.2" stroke="#9a9a9a" stroke-width="1.6" stroke-dasharray="3.2 1.8" fill="none"/><path d="M1209.2 321 V751" stroke="#9a9a9a" stroke-width="1.4" stroke-dasharray="3.2 1.8" fill="none"/><path d="M490.8 321 V751" stroke="#808080" stroke-width="1.1" stroke-dasharray="3.2 1.8" fill="none"/></svg>
<div class="abs" style="left:290.2px;top:81.4px;width:129.4px;height:63.2px;border:3.4px solid #8ed048;border-radius:8px;box-shadow:0 0 5px rgba(0,0,0,.45),inset 0 0 6px rgba(0,0,0,.45);background:rgba(255,255,255,.15)"></div><svg class="abs" style="left:0;top:0" width="856" height="468" viewBox="372 302 856 468"><path d="M727 396 V415" stroke="#c0504d" stroke-width="1.4"/><g fill="#c0504d"><circle cx="727" cy="396.2" r="5"/><circle cx="680" cy="415.3" r="5"/><circle cx="727" cy="415.3" r="5"/><circle cx="774.3" cy="415.3" r="5"/><circle cx="680" cy="434.4" r="5"/><circle cx="727" cy="434.4" r="5"/><circle cx="774.3" cy="434.4" r="5"/></g></svg>
<!--P1--></div>
</body>
</html>
